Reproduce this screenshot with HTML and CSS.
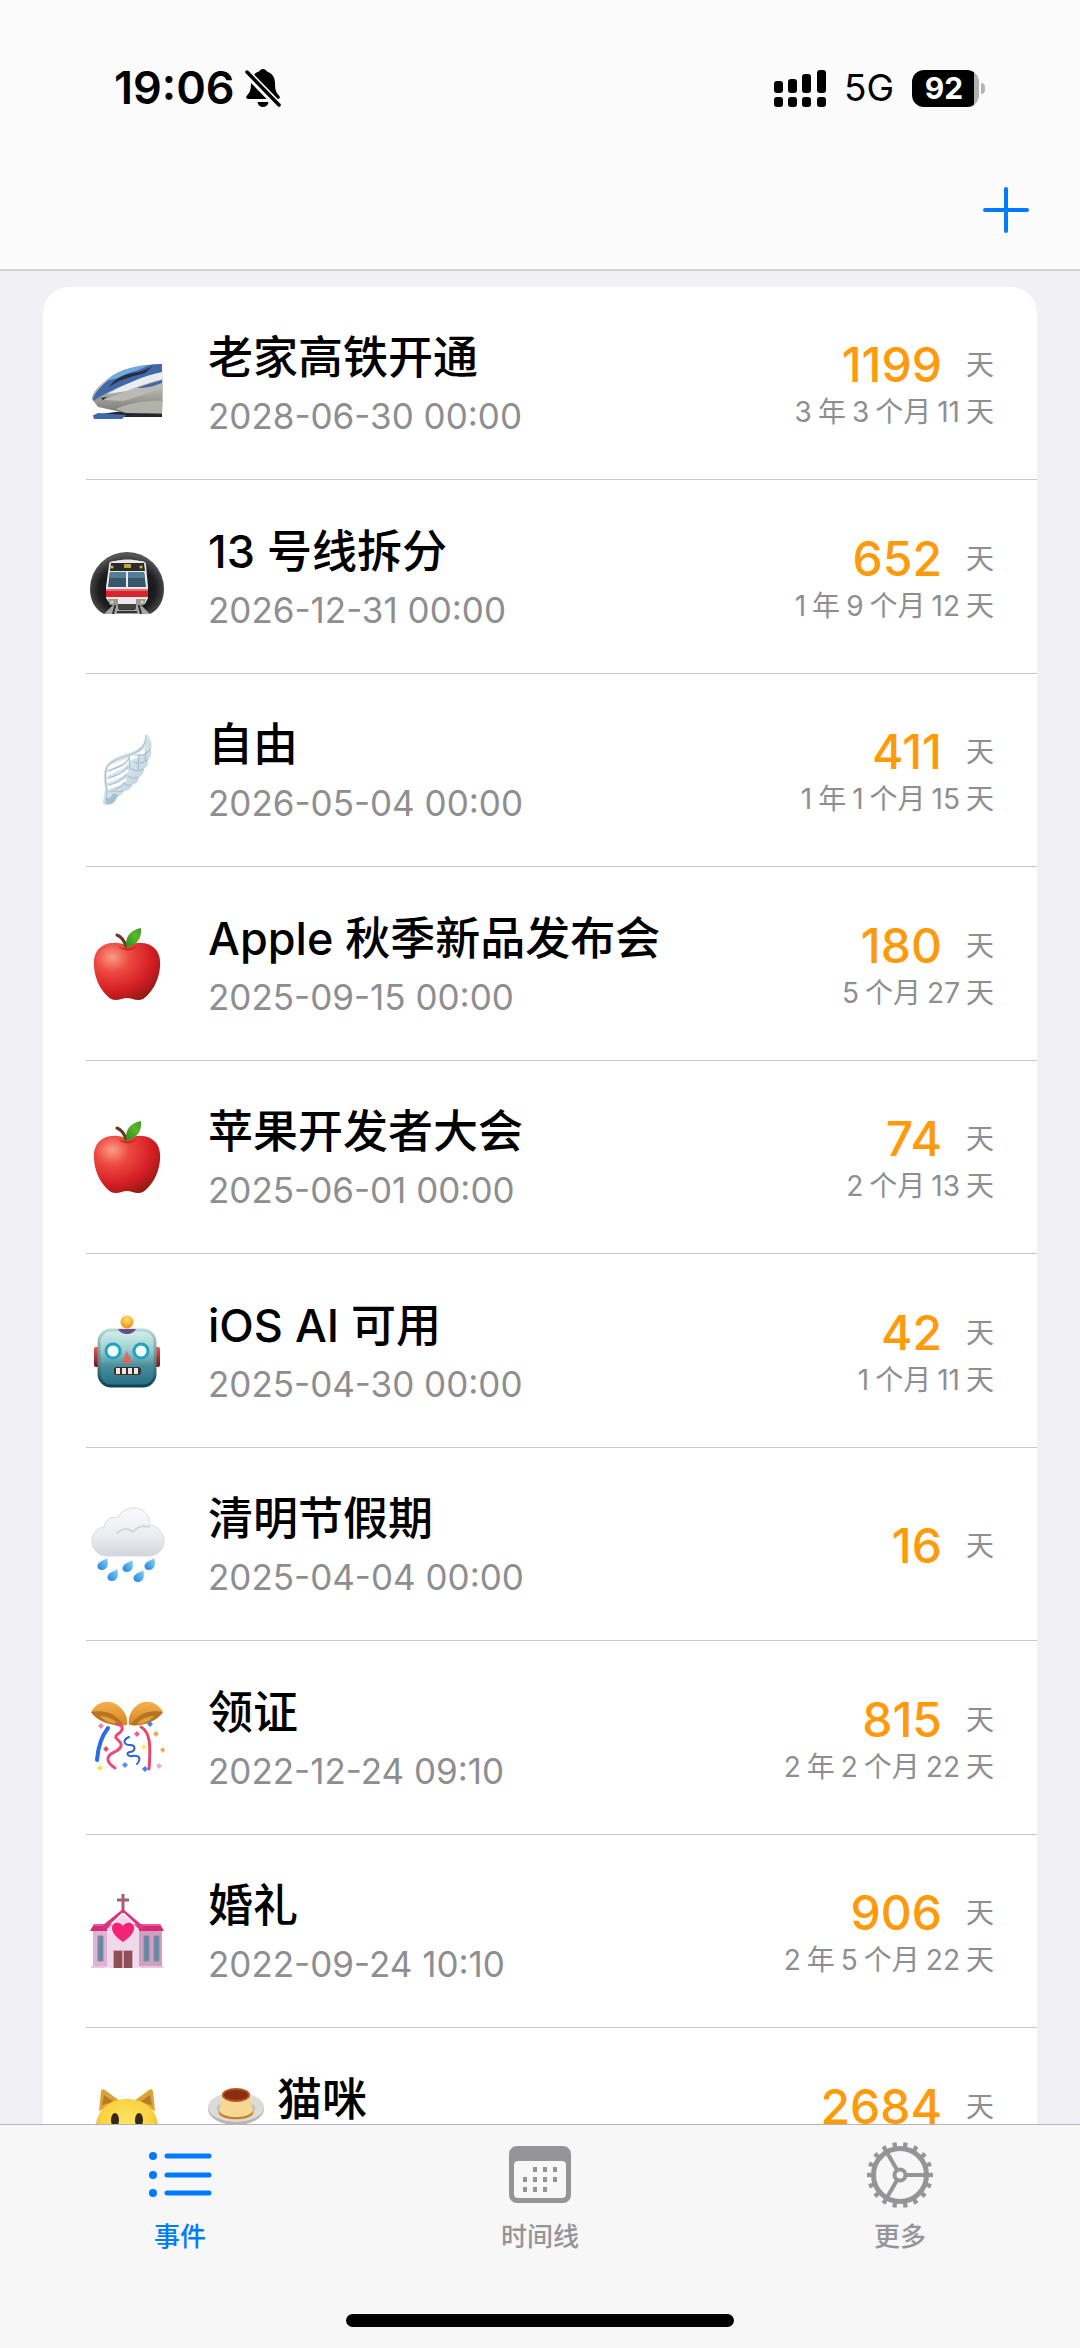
FILE: index.html
```html
<!DOCTYPE html>
<html lang="zh-CN">
<head>
<meta charset="utf-8">
<meta name="viewport" content="width=device-width, initial-scale=1">
<title>事件</title>
<link rel="stylesheet" href="styles.css">
</head>
<body>
<div class="app">
  <header class="top">
    <div class="status">
      <div class="status-left">
        <span class="clock">19:06</span>
        <svg class="bell" viewBox="0 0 36 40" aria-hidden="true">
          <path d="M18 1c2 0 3 1 4 2.500 5 1.500 8 6 8 11.500 0 8 1.500 10 4 12.500 1.600 1.700.8 3.500-1.500 3.500h-29c-2.300 0-3.100-1.800-1.500-3.500C4.500 25 6 23 6 15c0-5.500 3-10 8-11.500C15 2 16 1 18 1z"/>
          <path d="M12.500 34h11c-.5 3.200-2.800 5-5.500 5s-5-1.800-5.500-5z"/>
          <path d="M0 3l35 36" stroke="#fbfbfc" stroke-width="8"/>
          <path d="M2 4l32 33" stroke="#000" stroke-width="3.500" stroke-linecap="round"/>
        </svg>
      </div>
      <div class="status-right">
        <svg class="signal" viewBox="0 0 52 37" aria-hidden="true">
          <rect x="0" y="11" width="9" height="12" rx="3"/><rect x="14" y="9" width="9" height="14" rx="3"/><rect x="28" y="4" width="9" height="19" rx="3"/><rect x="43" y="0" width="9" height="23" rx="3"/>
          <rect x="0" y="27" width="9" height="10" rx="3"/><rect x="14" y="27" width="9" height="10" rx="3"/><rect x="28" y="27" width="9" height="10" rx="3"/><rect x="43" y="27" width="9" height="10" rx="3"/>
        </svg>
        <span class="network">5G</span>
        <span class="battery">92</span>
      </div>
    </div>
    <div class="nav">
      <button class="add" type="button" aria-label="添加">
        <svg viewBox="0 0 46 46" aria-hidden="true"><path d="M23 2v42M2 23h42"/></svg>
      </button>
    </div>
  </header>

  <main class="content">
    <ul class="card">
      <li class="row">
        <svg class="icon" viewBox="0 0 76 76" aria-hidden="true">
          <defs>
            <linearGradient id="tr" x1="0" y1="0" x2="0" y2="1"><stop offset="0" stop-color="#dfe2e4"/><stop offset=".6" stop-color="#a9a9a3"/><stop offset="1" stop-color="#77766e"/></linearGradient>
          </defs>
          <path d="M4 70l30-4 39 1v5H6z" fill="#23282f"/>
          <path d="M4 71l5-3 28 2-4 4H5z" fill="#3f68a8"/>
          <path d="M73 19c1 16 1 34 0 50l-36-1-28-6-6-8c0-5 5-12 14-19 14-11 36-16 56-16z" fill="url(#tr)"/>
          <path d="M73 19v12C50 33 26 42 4 56c0-5 4-11 13-19 14-12 36-18 56-18z" fill="#4268ac"/>
          <path d="M60 20c-20 1-34 7-43 16l12-3c12-6 20-7 31-13z" fill="#71a9d8"/>
          <path d="M64 21l-8 7c-8 3-22 4-36 14 7-9 13-12 24-14 8-1 14-4 20-7z" fill="#262f3e"/>
          <path d="M73 27C54 31 34 40 18 49l20-3c14-6 25-9 35-12z" fill="#e9edf0"/>
          <path d="M73 35c-22 5-42 14-59 20l20 1c15-4 26-9 39-12z" fill="#b9b9b6"/>
          <path d="M73 35c-9 2-17 5-25 8 10 0 17-2 25-5z" fill="#46669c"/>
          <path d="M73 56c-17-1-32 2-46 8l10 4h36z" fill="#b3b2aa"/>
          <path d="M12 53l6-1-4 3z" fill="#222"/>
        </svg>
        <div class="info"><h2 class="title">老家高铁开通</h2><time class="date">2028-06-30 00:00</time></div>
        <div class="left"><p class="count"><b class="num">1199</b>天</p><p class="span"><i>3</i><i>年</i><i>3</i><i>个月</i><i>11</i><i>天</i></p></div>
      </li>
      <li class="row">
        <svg class="icon" viewBox="0 0 76 76" aria-hidden="true">
          <defs><radialGradient id="tn" cx=".5" cy=".6" r=".55"><stop offset="0" stop-color="#0a0a0a"/><stop offset=".7" stop-color="#1d1d1d"/><stop offset="1" stop-color="#555"/></radialGradient></defs>
          <path d="M15 75C5 70 1 60 1 50a37 37 0 0 1 74 0c0 10-4 20-14 25z" fill="url(#tn)"/>
          <path d="M15 75l9-9h28l9 9z" fill="#a5a5a5"/>
          <path d="M24 75l3-12M52 75l-3-12M30 70h16M28 73h20" stroke="#333" stroke-width="2"/>
          <path d="M20 26c0-3 2-4 6-4 8-2 17-2 25 0 4 0 6 1 6 4l2 22v11l-3 6H21l-4-6V48z" fill="#e9e9e9"/>
          <path d="M22 24h33l1 8H21z" fill="#2b2b2b"/>
          <path d="M35 25h7v4h-7z" fill="#c0a531"/>
          <path d="M21 33h16v15H19zM39 33h16l2 15H39z" fill="#38566c"/>
          <path d="M21 33h16v6H20zM39 33h16l1 6H39z" fill="#547d98"/>
          <path d="M17 50h42v8H17z" fill="#d8242c"/>
          <path d="M17 51h42" stroke="#f6b6b5" stroke-width="1"/>
          <path d="M19 60h10v6h-8zM57 60H47v6h8z" fill="#999"/>
          <circle cx="23" cy="63" r="1.500" fill="#f5d55b"/><circle cx="53" cy="63" r="1.500" fill="#f5d55b"/>
          <circle cx="23" cy="28" r="1.500" fill="#e0b93f"/><circle cx="52" cy="28" r="1.500" fill="#e0b93f"/>
          <path d="M29 65h18v5H29z" fill="#444"/>
        </svg>
        <div class="info"><h2 class="title">13 号线拆分</h2><time class="date">2026-12-31 00:00</time></div>
        <div class="left"><p class="count"><b class="num">652</b>天</p><p class="span"><i>1</i><i>年</i><i>9</i><i>个月</i><i>12</i><i>天</i></p></div>
      </li>
      <li class="row">
        <svg class="icon" viewBox="0 0 76 76" aria-hidden="true">
          <defs><linearGradient id="wg" x1="0" y1="0" x2="1" y2="1"><stop offset="0" stop-color="#f3f7f9"/><stop offset="1" stop-color="#b4cbd7"/></linearGradient></defs>
          <path d="M58 2c3 4 6 9 4 15 1 4 0 8-3 11 1 4-1 7-4 9 0 4-2 7-5 8 0 5-3 7-7 8-1 4-4 6-8 6-1 4-5 5-8 7-1 4-4 7-9 7-3 0-5-1-4-4l2-13c-2-9-2-17 1-22 3-7 14-11 26-14 8-3 14-8 15-18z" fill="url(#wg)"/>
          <g fill="none" stroke="#fff" stroke-width="3" stroke-linecap="round"><path d="M19 42c7-4 14-5 20-12"/><path d="M19 49c7-3 13-4 19-10"/><path d="M19 56c6-2 12-4 17-8"/><path d="M20 36c9-6 26-9 37-18"/><path d="M43 26c5-2 11-5 14-9"/></g>
          <g fill="none" stroke="#a9c1ce" stroke-width="1.200" stroke-linecap="round"><path d="M57 3c0 11-6 16-14 19-12 4-22 7-25 13-3 6-2 14 0 23l-1 13"/><path d="M20 39c7-4 16-4 20-13"/><path d="M20 46c7-3 14-4 19-11"/><path d="M20 53c7-2 13-4 17-10"/><path d="M20 60c6-2 12-4 16-9"/><path d="M61 17c-4 6-10 7-15 6M58 28c-5 4-9 4-13 2M54 37c-4 3-8 2-11 0M49 45c-3 2-7 1-10-1M42 53c-3 1-5 0-8-2M34 59c-4 1-7 1-10 0M40 25l1 12M50 22l-1 16M57 16l-1 13"/></g>
          <path d="M16 66c5 1 7-2 8-5l5 2c-2 6-5 10-11 9z" fill="#a5c0ce"/>
        </svg>
        <div class="info"><h2 class="title">自由</h2><time class="date">2026-05-04 00:00</time></div>
        <div class="left"><p class="count"><b class="num">411</b>天</p><p class="span"><i>1</i><i>年</i><i>1</i><i>个月</i><i>15</i><i>天</i></p></div>
      </li>
      <li class="row">
        <svg class="icon" viewBox="0 0 76 76" aria-hidden="true">
          <defs>
            <radialGradient id="ap" cx=".28" cy=".25" r=".85"><stop offset="0" stop-color="#fb9c86"/><stop offset=".3" stop-color="#ed4a42"/><stop offset=".7" stop-color="#d51e24"/><stop offset="1" stop-color="#8f1a14"/></radialGradient>
            <linearGradient id="lf" x1="0" y1="1" x2="1" y2="0"><stop offset="0" stop-color="#2d8b1c"/><stop offset=".6" stop-color="#5cb62a"/><stop offset="1" stop-color="#3d9a22"/></linearGradient>
            <g id="apple">
              <path d="M38 20c7-4 16-4 23-1 8 4 11 12 10 22-1 14-9 27-17 32-6 3-11-1-16-1s-10 4-16 1C14 68 6 55 5 41c-1-10 2-18 10-22 7-3 16-3 23 1z" fill="url(#ap)"/>
              <path d="M29 20c6 3 13 3 19 0-5 6-14 6-19 0z" fill="#a81b18" opacity=".6"/>
              <path d="M37 20c-2-6-4-9-9-11" fill="none" stroke="#6b3520" stroke-width="3" stroke-linecap="round"/>
              <path d="M37 21c-1-10 4-17 15-19 1 10-4 18-15 19z" fill="url(#lf)"/>
            </g>
          </defs>
          <use href="#apple"/>
        </svg>
        <div class="info"><h2 class="title">Apple 秋季新品发布会</h2><time class="date">2025-09-15 00:00</time></div>
        <div class="left"><p class="count"><b class="num">180</b>天</p><p class="span"><i>5</i><i>个月</i><i>27</i><i>天</i></p></div>
      </li>
      <li class="row">
        <svg class="icon" viewBox="0 0 76 76" aria-hidden="true"><use href="#apple"/></svg>
        <div class="info"><h2 class="title">苹果开发者大会</h2><time class="date">2025-06-01 00:00</time></div>
        <div class="left"><p class="count"><b class="num">74</b>天</p><p class="span"><i>2</i><i>个月</i><i>13</i><i>天</i></p></div>
      </li>
      <li class="row">
        <svg class="icon" viewBox="0 0 76 76" aria-hidden="true">
          <defs>
            <linearGradient id="rb" x1="0" y1="0" x2="0" y2="1"><stop offset="0" stop-color="#d5f1ed"/><stop offset=".35" stop-color="#9ccfcf"/><stop offset=".65" stop-color="#468c9c"/><stop offset="1" stop-color="#256f84"/></linearGradient>
            <linearGradient id="rs" x1="0" y1="0" x2="0" y2="1"><stop offset="0" stop-color="#b7d8d4"/><stop offset="1" stop-color="#0f4552"/></linearGradient>
            <linearGradient id="re" x1="0" y1="0" x2="0" y2="1"><stop offset="0" stop-color="#f0544c"/><stop offset="1" stop-color="#7d1018"/></linearGradient>
            <radialGradient id="ro" cx=".5" cy=".3" r=".7"><stop offset="0" stop-color="#ffe36a"/><stop offset="1" stop-color="#f08a17"/></radialGradient>
          </defs>
          <rect x="5" y="34" width="7" height="20" rx="2" fill="url(#re)"/><rect x="64" y="34" width="7" height="20" rx="2" fill="url(#re)"/>
          <rect x="10" y="17" width="56" height="56" rx="12" fill="url(#rb)" stroke="url(#rs)" stroke-width="3"/>
          <path d="M29 16h18c-2 4-6 5-9 5s-7-1-9-5z" fill="#6a4a88"/>
          <circle cx="38" cy="9" r="6.500" fill="url(#ro)"/>
          <circle cx="24" cy="38" r="7" fill="#f2fdff" stroke="#20a3bd" stroke-width="3"/><circle cx="52" cy="38" r="7" fill="#f2fdff" stroke="#20a3bd" stroke-width="3"/>
          <path d="M38 38l5 12H33z" fill="#dc6660"/>
          <rect x="25" y="54" width="27" height="8" rx="3" fill="#3b2d27"/>
          <path d="M27 55h4v6h-4zM33 55h4v6h-4zM39 55h4v6h-4zM45 55h4v6h-4z" fill="#eee8e0"/>
        </svg>
        <div class="info"><h2 class="title">iOS AI 可用</h2><time class="date">2025-04-30 00:00</time></div>
        <div class="left"><p class="count"><b class="num">42</b>天</p><p class="span"><i>1</i><i>个月</i><i>11</i><i>天</i></p></div>
      </li>
      <li class="row">
        <svg class="icon" viewBox="0 0 76 76" aria-hidden="true">
          <defs>
            <linearGradient id="cl" x1="0" y1="0" x2="0" y2="1"><stop offset="0" stop-color="#fafafd"/><stop offset=".6" stop-color="#ebecf1"/><stop offset="1" stop-color="#d3d5dd"/></linearGradient>
            <linearGradient id="dp" x1="1" y1="0" x2="0" y2="1"><stop offset="0" stop-color="#8fd4f8"/><stop offset="1" stop-color="#1583dd"/></linearGradient>
            <path id="drop" d="M9 0c2 5 1 12-5 12-5 0-6-5-2-8 3-2 5-2 7-4z"/>
          </defs>
          <path d="M18 50C9 50 3 43 3 35c0-8 5-13 12-14 1-7 7-11 13-9 3-5 9-10 17-10 9 0 16 7 16 17 8 1 14 8 14 16 0 9-7 15-16 15z" fill="url(#cl)" stroke="#d8dae1" stroke-width="1"/>
          <path d="M28 27c5-5 12-5 16-1 4-5 10-7 16-5" fill="none" stroke="#d3d6df" stroke-width="2" stroke-linecap="round"/>
          <g fill="url(#dp)"><use href="#drop" x="9" y="52"/><use href="#drop" x="34" y="54"/><use href="#drop" x="56" y="52"/><use href="#drop" x="19" y="63"/><use href="#drop" x="45" y="64"/></g>
        </svg>
        <div class="info"><h2 class="title">清明节假期</h2><time class="date">2025-04-04 00:00</time></div>
        <div class="left"><p class="count"><b class="num">16</b>天</p></div>
      </li>
      <li class="row">
        <svg class="icon" viewBox="0 0 76 76" aria-hidden="true">
          <defs><linearGradient id="bl" x1="0" y1="0" x2="0" y2="1"><stop offset="0" stop-color="#f5b04c"/><stop offset="1" stop-color="#d08824"/></linearGradient></defs>
          <path d="M2 12C9 0 22-1 31 7c5 5 8 11 7 18-12 2-30-3-36-13z" fill="url(#bl)"/>
          <path d="M2 12c9-2 20 0 25 5 4 3 6 5 7 8-12 1-26-4-32-13z" fill="#b87420"/>
          <path d="M11 16c6 0 15 3 18 8-7 0-14-3-18-8z" fill="#dea13c"/>
          <path d="M74 12C67 0 54-1 46 7c-5 5-7 11-6 18 11 2 28-3 34-13z" fill="url(#bl)"/>
          <path d="M74 12c-9-2-20 0-25 5-4 3-6 5-7 8 12 1 26-4 32-13z" fill="#b87420"/>
          <path d="M65 16c-6 0-14 3-17 8 7 0 13-3 17-8z" fill="#dea13c"/>
          <g fill="none" stroke-linecap="round"><path d="M19 28C12 37 9 47 8 60" stroke="#2a6bea" stroke-width="4"/><path d="M27 24c8 1 8 6 2 10-7 5 5 6 3 12-2 7-14 6-13 14 1 5 5 6 7 8" stroke="#ec4b78" stroke-width="3"/><path d="M52 27c9 5 10 17 8 42" stroke="#e8476c" stroke-width="3"/><path d="M40 37c-7 3-5 8 1 8s6 6 0 7c-5 1-2 5 3 4 7-1 8 3 4 8" stroke="#2a62cf" stroke-width="2"/></g>
          <g><path d="M9 26l3-3 3 3-3 3z" fill="#ee86a8"/><path d="M14 49l3-3 3 3-3 3z" fill="#e05078"/><path d="M45 34l3-3 3 3-3 3z" fill="#ec5f92"/><path d="M58 24l3-3 3 3-3 3z" fill="#4d80e4"/><path d="M64 34l3-3 3 3-3 3z" fill="#f2a55c"/><path d="M71 50l3-3 2 3-2 3z" fill="#f2a55c"/><path d="M52 47l3-3 3 3-3 3z" fill="#faea6e"/><path d="M8 68l3-3 3 3-3 3z" fill="#f8e544"/><path d="M33 65l3-3 3 3-3 3z" fill="#5c8de5"/><path d="M53 69l3-3 3 3-3 3z" fill="#4d80e4"/><path d="M67 66l3-3 3 3-3 3z" fill="#f5a8cb"/></g>
        </svg>
        <div class="info"><h2 class="title">领证</h2><time class="date">2022-12-24 09:10</time></div>
        <div class="left"><p class="count"><b class="num">815</b>天</p><p class="span"><i>2</i><i>年</i><i>2</i><i>个月</i><i>22</i><i>天</i></p></div>
      </li>
      <li class="row">
        <svg class="icon" viewBox="0 0 76 76" aria-hidden="true">
          <path d="M34 1v19M28 7h12" stroke="#a4636a" stroke-width="3"/>
          <path d="M4 36h69v38H4z" fill="#dcb3d3"/><path d="M50 36h23v38H50z" fill="#cba2c2"/>
          <path d="M5 31h66l4 7H1z" fill="#d62c78"/><path d="M5 31h66l1 2H4z" fill="#ed5799"/>
          <path d="M18 75V36l16-15 16 15v39z" fill="#efd9ea"/>
          <path d="M14 38l20-19 20 19v-5L34 16 14 32z" fill="#dc3580"/>
          <path d="M34 49c-7-5-11-9-11-14 0-6 8-7 11-2 3-5 11-4 11 2 0 5-4 9-11 14z" fill="#f32378"/>
          <path d="M9 43h5v25H9zM55 43h5v25h-5zM65 43h5v25h-5z" fill="#578fa9" stroke="#9f7ea0" stroke-width="1"/>
          <path d="M24 57h20v18H24z" fill="#d7a5ba"/><path d="M25 58h8v17h-8zM35 58h8v17h-8z" fill="#8d5053"/>
          <path d="M2 74h14M51 74h23" stroke="#f0c5df" stroke-width="2"/>
        </svg>
        <div class="info"><h2 class="title">婚礼</h2><time class="date">2022-09-24 10:10</time></div>
        <div class="left"><p class="count"><b class="num">906</b>天</p><p class="span"><i>2</i><i>年</i><i>5</i><i>个月</i><i>22</i><i>天</i></p></div>
      </li>
      <li class="row">
        <svg class="icon" viewBox="0 0 76 76" aria-hidden="true">
          <defs><radialGradient id="ct" cx=".5" cy=".4" r=".6"><stop offset="0" stop-color="#ffe566"/><stop offset=".7" stop-color="#fbd13f"/><stop offset="1" stop-color="#dc9f22"/></radialGradient></defs>
          <path d="M10 24L12 4c1-2 3-2 4-1l15 11zM66 24L64 4c-1-2-3-2-4-1L45 14z" fill="#dba437"/>
          <path d="M13 18l2-10 10 7zM63 18l-2-10-10 7z" fill="#b57928"/>
          <path d="M38 12c17 0 28 9 31 25 3 20-10 34-31 34S4 57 7 37c3-16 14-25 31-25z" fill="url(#ct)"/>
          <ellipse cx="26" cy="33" rx="4" ry="7" fill="#33281a"/><ellipse cx="50" cy="33" rx="4" ry="7" fill="#33281a"/>
          <path d="M34 44h8l-4 4zM28 50c3 4 8 3 10-1 2 4 7 5 10 1" fill="#9c5d24"/>
        </svg>
        <div class="info"><h2 class="title"><svg class="pudding" viewBox="0 0 57 40" aria-hidden="true">
          <ellipse cx="28" cy="23" rx="28" ry="16" fill="#b9b6b2"/><ellipse cx="28" cy="21" rx="28" ry="15" fill="#dddbd8"/><ellipse cx="28" cy="23" rx="19" ry="10" fill="#c5beb5"/>
          <path d="M14 9l-3 17c2 8 32 8 34 0L42 9z" fill="#f6d895"/><path d="M11 25c5 8 29 8 34 0v3c-4 7-30 7-34 0z" fill="#c98026"/>
          <ellipse cx="28" cy="9" rx="14" ry="7" fill="#b4531c"/><ellipse cx="28" cy="9" rx="12" ry="5" fill="#8a2e12"/>
        </svg> 猫咪</h2><time class="date"></time></div>
        <div class="left"><p class="count"><b class="num">2684</b>天</p><p class="span"></p></div>
      </li>
    </ul>
  </main>

  <nav class="tabs">
    <div class="tab-list">
      <a class="tab active" href="#events" aria-current="page">
        <svg viewBox="0 0 68 68" aria-hidden="true"><g fill="currentColor"><circle cx="7" cy="15" r="4"/><circle cx="7" cy="34" r="4"/><circle cx="7" cy="52" r="4"/></g><path d="M21 15h42M21 34h42M21 52h42" stroke="currentColor" stroke-width="5" stroke-linecap="round"/></svg>
        事件
      </a>
      <a class="tab" href="#timeline">
        <svg viewBox="0 0 68 68" aria-hidden="true"><path fill="currentColor" fill-rule="evenodd" d="M11 5h46a8 8 0 0 1 8 8v41a8 8 0 0 1-8 8H11a8 8 0 0 1-8-8V13a8 8 0 0 1 8-8zM12 20a4 4 0 0 0-4 4v29a4 4 0 0 0 4 4h44a4 4 0 0 0 4-4V24a4 4 0 0 0-4-4z"/>
        <path d="M27 28.500h4M37 28.500h4M47 28.500h4M17 38.500h4M27 38.500h4M37 38.500h4M47 38.500h4M17 48.500h4M27 48.500h4M37 48.500h4" stroke="currentColor" stroke-width="5"/></svg>
        时间线
      </a>
      <a class="tab" href="#more">
        <svg viewBox="0 0 68 68" aria-hidden="true"><g fill="none" stroke="currentColor"><circle cx="34" cy="34" r="26.500" stroke-width="5"/><circle cx="34" cy="34" r="5.500" stroke-width="4"/><path d="M41 34h19M30.500 28L21 11.500M30.500 40L21 56.500" stroke-width="4"/>
        <circle cx="34" cy="34" r="30.500" stroke-width="5" pathLength="180" stroke-dasharray="4 6" stroke-dashoffset="2"/></g></svg>
        更多
      </a>
    </div>
    <div class="home-bar"></div>
  </nav>
</div>
</body>
</html>
```
FILE: styles.css
```css
* { box-sizing: border-box; }

body {
  margin: 0;
  background: #f0f0f5;
  color: #000;
  font-family: Inter, "Noto Sans CJK SC", sans-serif;
}

h2, p, ul { margin: 0; padding: 0; font-weight: 400; }

.app {
  display: flex;
  flex-direction: column;
  height: 100vh;
}

/* Status and navigation bars */
.top {
  flex: none;
  background: #fbfbfc;
  border-bottom: 2px solid #d2d2d5;
}
.status {
  display: flex;
  justify-content: space-between;
  align-items: center;
  padding: 60px 101px 0 114px;
}
.status-left, .status-right { display: flex; align-items: center; }
.status-left { gap: 10px; }
.clock { font-size: 45px; line-height: 56px; font-weight: 600; }
.bell { width: 36px; height: 40px; }
.signal { width: 52px; height: 37px; }
.network { margin: 0 18px; font-size: 37px; line-height: 40px; }
.battery {
  position: relative;
  width: 67px;
  height: 37px;
  border-radius: 12px;
  background: linear-gradient(90deg, #000 62px, #b0b0b2 62px);
  color: #fff;
  font-size: 30px;
  line-height: 37px;
  font-weight: 700;
  text-align: center;
  padding-right: 3px;
}
.battery::after {
  content: "";
  position: absolute;
  left: 69px;
  top: 13px;
  width: 4px;
  height: 11px;
  border-radius: 0 4px 4px 0;
  background: #b5b5b8;
}
.nav {
  display: flex;
  justify-content: flex-end;
  padding: 71px 51px 36px;
}
.add {
  width: 46px;
  height: 46px;
  padding: 0;
  border: 0;
  background: none;
}
.add svg {
  display: block;
  fill: none;
  stroke: #007aff;
  stroke-width: 4;
  stroke-linecap: round;
}

/* Event list */
.content {
  flex: 1;
  min-height: 0;
  overflow: hidden;
  padding: 16px 43px 0;
}
.card {
  list-style: none;
  border-radius: 26px;
  background: #fff;
  padding-left: 43px;
}
.row {
  display: flex;
  align-items: center;
  min-height: 193px;
  padding-right: 43px;
  border-bottom: 1px solid #c8c8ca;
}
.row:nth-child(even) { min-height: 194px; }
.icon { flex: none; width: 76px; height: 76px; margin: 0 43px 0 3px; }
.info { flex: 1; padding-top: 6px; }
.title {
  font-size: 45px;
  line-height: 60px;
  font-weight: 500;
}
.date {
  display: block;
  min-height: 56px;
  color: #8e8e90;
  font-size: 35px;
  line-height: 56px;
}
.left { padding-top: 4px; color: #8e8e90; font-size: 28px; }
.count {
  display: flex;
  justify-content: flex-end;
  align-items: center;
  gap: 24px;
  line-height: 54px;
}
.num { color: #ff9a0a; font-size: 48px; font-weight: 500; }
.span {
  display: flex;
  justify-content: flex-end;
  gap: 6px;
  min-height: 40px;
  line-height: 40px;
}
.span i { font-style: normal; }
.left .count:only-child { line-height: 56px; }
.pudding { width: 57px; height: 40px; vertical-align: -10px; }

/* Tab bar */
.tabs {
  flex: none;
  border-top: 1px solid #b4b4b6;
  background: #f7f7f7;
  padding-bottom: 21px;
}
.tab-list { display: flex; }
.tab {
  flex: 1;
  display: flex;
  flex-direction: column;
  align-items: center;
  padding-top: 16px;
  color: #959597;
  font-size: 26px;
  line-height: 56px;
  font-weight: 500;
  text-decoration: none;
}
.tab svg { width: 68px; height: 68px; fill: none; }
.tab.active { color: #007aff; }
.home-bar {
  width: 36%;
  height: 13px;
  margin: 49px auto 0;
  border-radius: 7px;
  background: #000;
}
```
